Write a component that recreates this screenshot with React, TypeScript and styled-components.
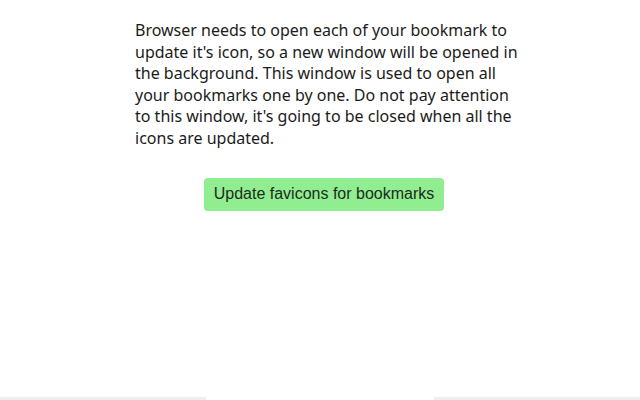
import React from 'react';
import styled, { createGlobalStyle } from 'styled-components';

const GlobalStyle = createGlobalStyle`
  html, body {
    margin: 0;
    padding: 0;
    background: #ffffff;
  }
  body {
    height: 400px;
    overflow: hidden;
  }
`;

const Page = styled.div`
  height: 400px;
  display: flex;
  flex-direction: column;
`;

const Main = styled.div`
  flex: 1;
  padding-left: 8px;
`;

const Content = styled.div`
  width: 378px;
  margin: 0 auto;
  padding-top: 20px;
  display: flex;
  flex-direction: column;
  align-items: center;
`;

const Notice = styled.p`
  margin: 0 -8px 0 0;
  font-family: "Noto Sans", sans-serif;
  font-size: 16px;
  line-height: 21.6px;
  color: #1b1b1b;
  align-self: stretch;
`;

const UpdateButton = styled.button`
  margin-top: 28px;
  width: 240px;
  height: 33px;
  border: none;
  border-radius: 4px;
  background-color: #90ee90;
  color: #1f2a1f;
  font-family: "Liberation Sans", Arial, sans-serif;
  font-size: 16px;
  cursor: pointer;
`;

const Footer = styled.div`
  display: flex;
  height: 3px;
`;

interface SegmentProps {
  $fill: boolean;
}

const Segment = styled.div<SegmentProps>`
  flex: ${p => (p.$fill ? 1 : '0 0 228px')};
  background: ${p => (p.$fill ? '#efefef' : '#ffffff')};
`;

export default function App() {
  return (
    <>
      <GlobalStyle />
      <Page>
        <Main>
          <Content>
            <Notice>
              Browser needs to open each of your bookmark to update it's icon, so a new window will be opened in
              the background. This window is used to open all your bookmarks one by one. Do not pay attention
              to this window, it's going to be closed when all the icons are updated.
            </Notice>
            <UpdateButton>Update favicons for bookmarks</UpdateButton>
          </Content>
        </Main>
        <Footer>
          <Segment $fill />
          <Segment $fill={false} />
          <Segment $fill />
        </Footer>
      </Page>
    </>
  );
}
